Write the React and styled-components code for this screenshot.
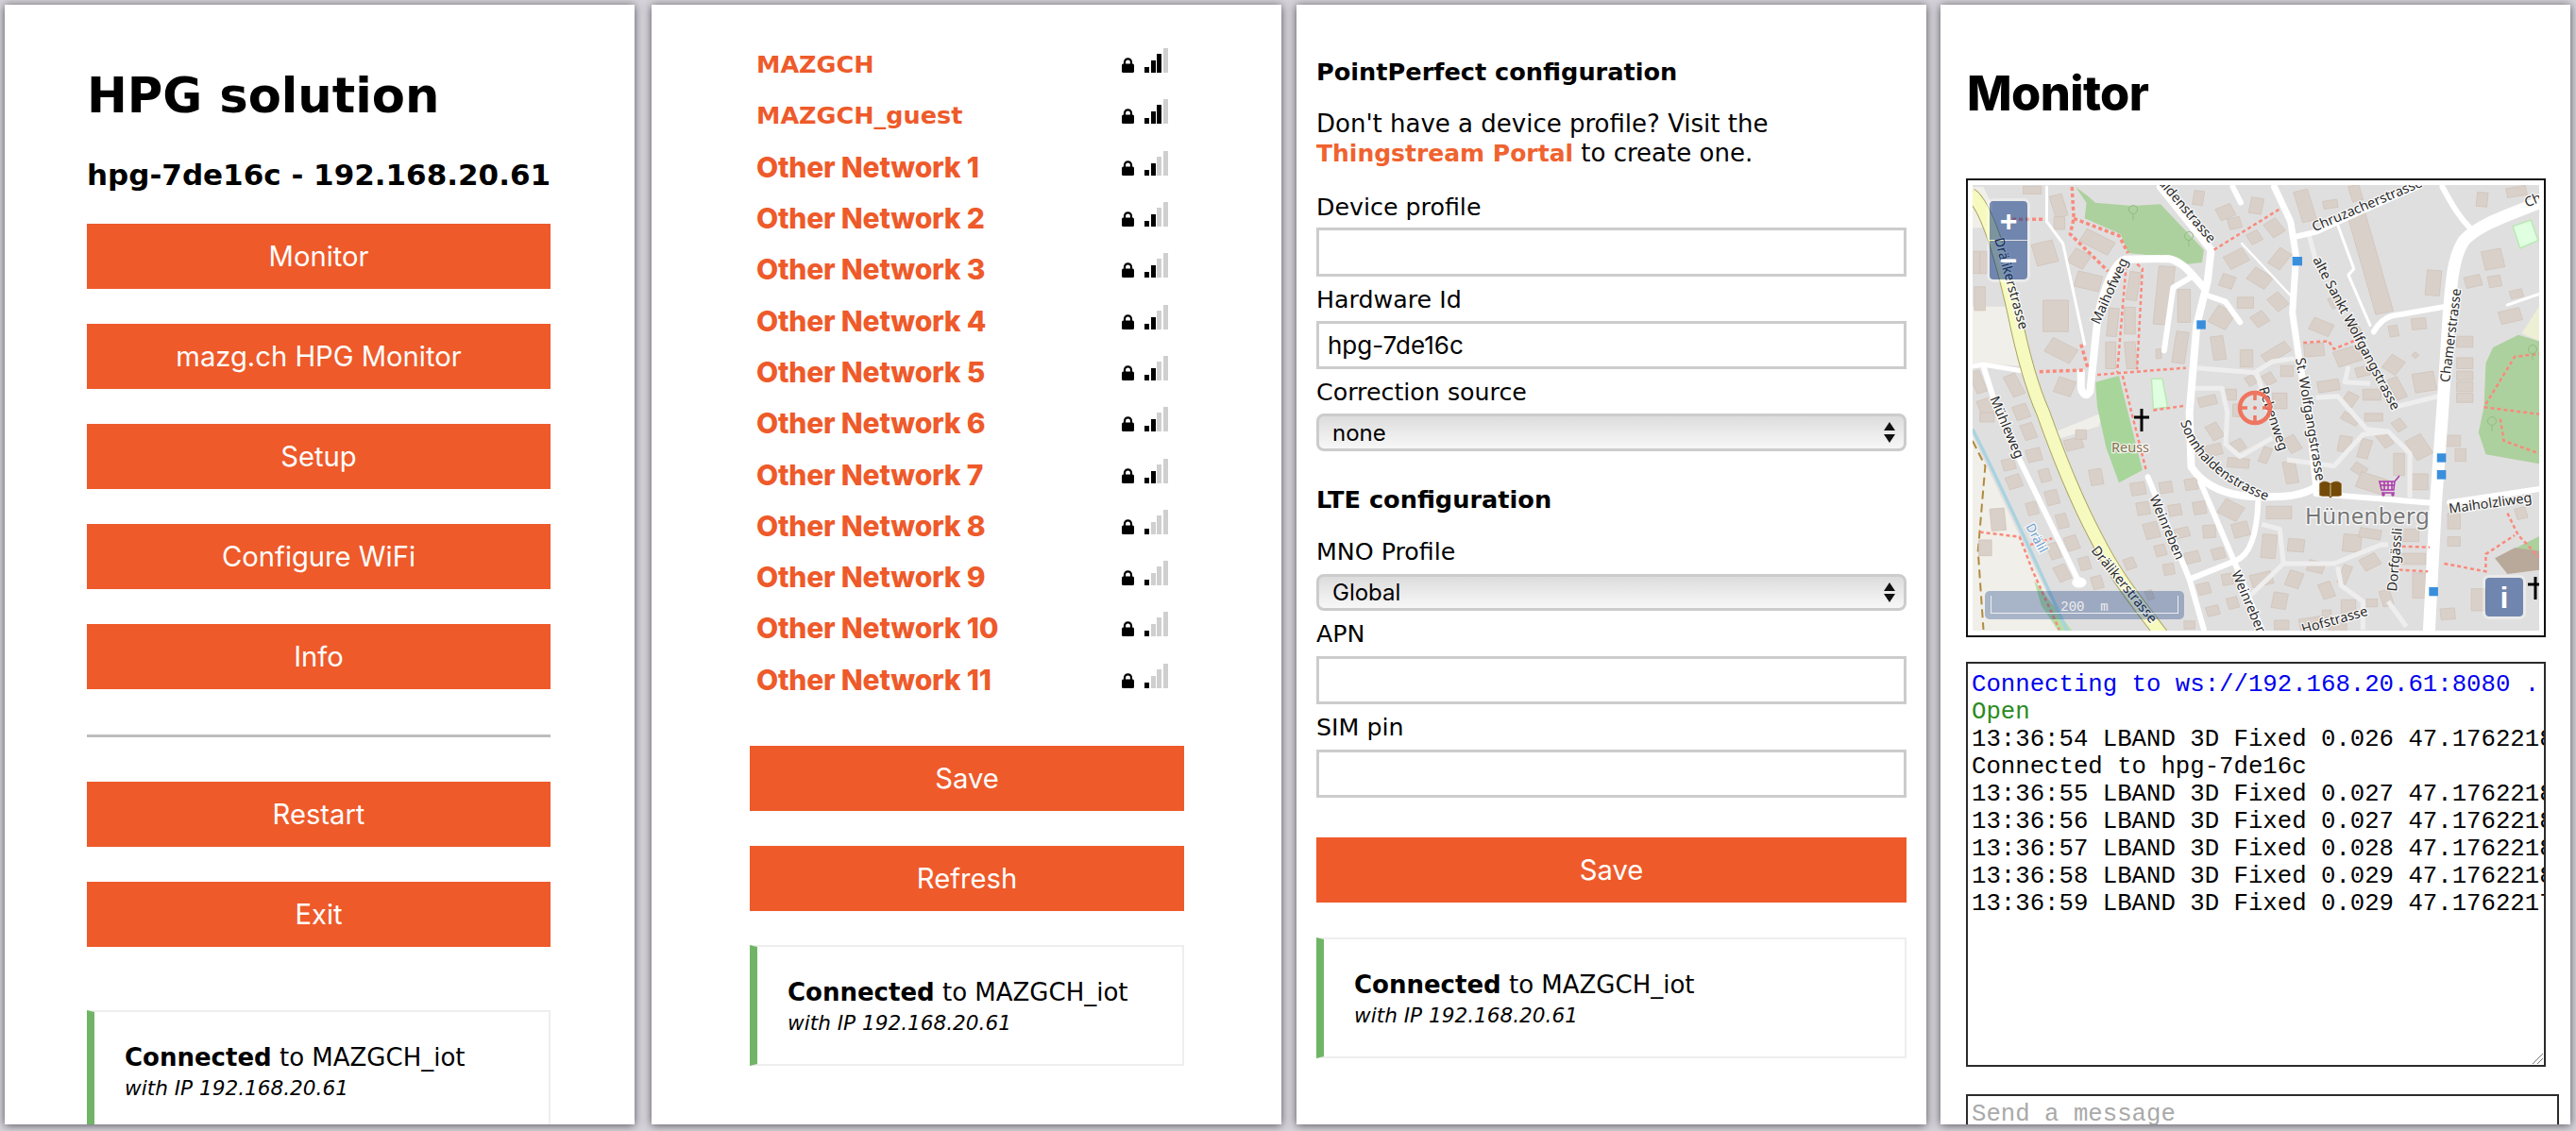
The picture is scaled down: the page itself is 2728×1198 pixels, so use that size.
import React from 'react';
import styled, { createGlobalStyle } from 'styled-components';

const ORANGE = '#ee5a2a';

const GlobalStyle = createGlobalStyle`
  html, body { margin: 0; padding: 0; background: #d6d4da; }
  * { box-sizing: border-box; }
`;

const Page = styled.div`
  display: flex;
  align-items: flex-start;
  width: 2728px;
  height: 1198px;
  padding: 5px 0 0 5px;
  overflow: hidden;
`;

const Panel = styled.section`
  flex: none;
  width: 667px;
  height: 1186px;
  margin-left: ${(p) => p.$gap || 0}px;
  padding: ${(p) => p.$pad};
  background: #fff;
  overflow: hidden;
  box-shadow: 0 1px 9px rgba(40, 38, 46, 0.75);
  font-family: 'DejaVu Sans', sans-serif;
  color: #000;
`;

const Title = styled.h1`
  margin: 0;
  font-size: 51.2px;
  line-height: 60px;
  font-weight: 700;
`;

const SubTitle = styled.h3`
  margin: 37px 0 35px;
  font-size: 31px;
  line-height: 34px;
  font-weight: 700;
  white-space: nowrap;
`;

const Button = styled.div`
  display: flex;
  align-items: center;
  justify-content: center;
  height: 69px;
  margin-top: ${(p) => p.$top ?? 37}px;
  background: ${ORANGE};
  color: #fff;
  font-family: Inter, sans-serif;
  font-size: 29.2px;
`;

const Divider = styled.hr`
  height: 3px;
  margin: 48px 0 47px;
  border: 0;
  background: #bdbdbd;
`;

const Status = styled.div`
  height: 128px;
  margin-top: ${(p) => p.$top}px;
  padding: 33px 0 0 32px;
  border: 2px solid #eee;
  border-left: 8px solid #70b566;
`;

const StatusMain = styled.div`
  font-size: 26px;
  line-height: 30px;
  white-space: nowrap;
`;

const StatusSub = styled.div`
  margin-top: 3px;
  font-size: 21.6px;
  line-height: 30px;
  font-style: italic;
`;

const NetworkList = styled.div`
  display: grid;
  grid-auto-rows: 54.3px;
  padding: 0 17px 0 7px;
`;

const NetworkRow = styled.div`
  display: flex;
  align-items: center;
  justify-content: space-between;
`;

const NetworkName = styled.a`
  color: ${ORANGE};
  font-family: ${(p) => (p.$known ? "'DejaVu Sans', sans-serif" : 'Inter, sans-serif')};
  font-size: ${(p) => (p.$known ? 25.5 : 30)}px;
  font-weight: ${(p) => (p.$known ? 700 : 800)};
  letter-spacing: ${(p) => (p.$known ? 0 : -0.2)}px;
`;

const NetworkIcons = styled.div`
  display: flex;
  align-items: flex-end;
  gap: 11px;
  margin-top: -8px;
`;

const Bars = styled.div`
  display: flex;
  align-items: flex-end;
  gap: 1.7px;
`;

const Bar = styled.i`
  display: block;
  width: 5px;
  height: ${(p) => p.$h}px;
  background: ${(p) => (p.$on ? '#000' : '#cfcfcf')};
`;

const SectionTitle = styled.h4`
  margin: ${(p) => p.$margin};
  font-size: 25.6px;
  line-height: 34px;
  font-weight: 700;
`;

const Paragraph = styled.p`
  margin: 23px 0 27px;
  font-size: 26px;
  line-height: 31px;
`;

const PortalLink = styled.a`
  color: #f0622f;
  font-size: 25px;
  font-weight: 700;
`;

const Label = styled.label`
  display: block;
  margin-top: ${(p) => p.$top ?? 10}px;
  margin-bottom: ${(p) => p.$bottom ?? 8}px;
  font-size: 25.3px;
  line-height: 30px;
`;

const TextInput = styled.input`
  display: block;
  width: 100%;
  height: ${(p) => p.$h || 51}px;
  padding: 0 9px;
  border: 3px solid #ccc;
  border-radius: 0;
  outline: 0;
  background: #fff;
  color: #000;
  font-family: Inter, sans-serif;
  font-size: 26px;
`;

const SelectWrap = styled.div`
  position: relative;
  height: ${(p) => p.$h || 40}px;

  &::before,
  &::after {
    content: '';
    position: absolute;
    right: 12px;
    border-left: 6px solid transparent;
    border-right: 6px solid transparent;
  }
  &::before {
    top: 9px;
    border-bottom: 9px solid #111;
  }
  &::after {
    bottom: 9px;
    border-top: 9px solid #111;
  }
`;

const Select = styled.select`
  display: block;
  width: 100%;
  height: 100%;
  padding: 0 0 0 14px;
  border: 3px solid #ccc;
  border-radius: 8px;
  outline: 0;
  appearance: none;
  background: linear-gradient(#dcdcdc, #ececec 55%, #f7f7f7);
  color: #000;
  font-family: Inter, sans-serif;
  font-size: 24px;
`;

const MonitorTitle = styled.h1`
  margin: 0 0 60px 1px;
  font-family: Inter, sans-serif;
  font-size: 50.5px;
  line-height: 60px;
  font-weight: 800;
  letter-spacing: -0.6px;
`;

const MapFrame = styled.div`
  width: 614px;
  height: 486px;
  padding: 5px;
  border: 2px solid #111;
`;

const MapBox = styled.div`
  position: relative;
  width: 600px;
  height: 472px;
  overflow: hidden;
  background: #e0dfdf;
`;

const MapSvg = styled.svg`
  display: block;
  path, polygon, rect {
    vector-effect: non-scaling-stroke;
  }
  text {
    font-family: 'Noto Sans', sans-serif;
    paint-order: stroke;
    stroke: rgba(255, 255, 255, 0.8);
    stroke-width: 2.5px;
  }
`;

const ZoomControl = styled.div`
  position: absolute;
  left: 18px;
  top: 17px;
  width: 40px;
  display: flex;
  flex-direction: column;
  gap: 1px;
  outline: 3px solid rgba(255, 255, 255, 0.35);
  border-radius: 4px;
`;

const MapButton = styled.div`
  display: flex;
  align-items: center;
  justify-content: center;
  width: 40px;
  height: 41px;
  background: rgba(0, 45, 125, 0.5);
  border-radius: ${(p) => p.$radius || '4px'};
  color: #fff;
  font-family: 'Liberation Sans', sans-serif;
  font-size: 32px;
  font-weight: 700;
  line-height: 1;
`;

const InfoButton = styled(MapButton)`
  position: absolute;
  left: 543px;
  top: 416px;
  outline: 3px solid rgba(255, 255, 255, 0.35);
`;

const ScaleBox = styled.div`
  position: absolute;
  left: 13px;
  top: 430px;
  width: 211px;
  height: 30px;
  padding: 5px 6px 6px;
  background: rgba(0, 45, 125, 0.3);
  border-radius: 5px;
`;

const ScaleLine = styled.div`
  height: 19px;
  border: 1px solid #eee;
  border-top: 0;
  color: #eee;
  font-family: 'Liberation Mono', monospace;
  font-size: 14px;
  line-height: 24px;
  text-align: center;
  white-space: pre;
`;

const LogBox = styled.div`
  position: relative;
  width: 614px;
  height: 429px;
  margin-top: 26px;
  padding: 8px 0 0 4px;
  border: 2px solid #2b2b2b;
  overflow: hidden;
  font-family: 'Liberation Mono', monospace;
  font-size: 25.7px;
  line-height: 29px;
`;

const LogLine = styled.div`
  color: ${(p) => p.$color || '#000'};
  white-space: pre;
`;

const ResizeGrip = styled.svg`
  position: absolute;
  right: 1px;
  bottom: 1px;
`;

const MessageInput = styled.input`
  display: block;
  width: 628px;
  height: 42px;
  margin-top: 29px;
  padding: 0 4px;
  border: 2px solid #2b2b2b;
  border-radius: 0;
  outline: 0;
  font-family: 'Liberation Mono', monospace;
  font-size: 25.7px;
  &::placeholder {
    color: #a9a9a9;
  }
`;

const networks = [
  ['MAZGCH', 3, true],
  ['MAZGCH_guest', 3, true],
  ['Other Network 1', 2],
  ['Other Network 2', 2],
  ['Other Network 3', 2],
  ['Other Network 4', 2],
  ['Other Network 5', 2],
  ['Other Network 6', 2],
  ['Other Network 7', 2],
  ['Other Network 8', 1],
  ['Other Network 9', 1],
  ['Other Network 10', 1],
  ['Other Network 11', 1],
];

const logLines = [
  ['Connecting to ws://192.168.20.61:8080 ...', '#0000ee'],
  ['Open', '#2b8a1e'],
  ['13:36:54 LBAND 3D Fixed 0.026 47.17622185'],
  ['Connected to hpg-7de16c'],
  ['13:36:55 LBAND 3D Fixed 0.027 47.17622184'],
  ['13:36:56 LBAND 3D Fixed 0.027 47.17622183'],
  ['13:36:57 LBAND 3D Fixed 0.028 47.17622182'],
  ['13:36:58 LBAND 3D Fixed 0.029 47.17622181'],
  ['13:36:59 LBAND 3D Fixed 0.029 47.17622179'],
];

// map is authored in the coordinates of the zoomed crops: x * 2.613, y * 3
const LOW = 717;

const terrain = [
  ['#f1efe9', '0,0 30,0 55,60 50,130 0,130'],
  ['#f1efe9', '0,380 105,380 150,570 0,560'],
  ['#f1efe9', '0,790 20,840 180,1230 270,1434 0,1434'],
  ['#f1efe9', '225,780 360,717 350,760 240,800'],
  ['#add19e', '285,0 320,30 340,50 440,60 520,55 640,200 635,240 595,245 560,225 430,210 410,150 310,100 315,50'],
  ['#a8d59a', '340,620 405,600 430,717 470,900 405,940 370,830 345,700'],
  ['#add19e', '1440,510 1510,470 1568,490 1568,880 1420,850 1400,780 1415,700 1420,560'],
  ['#eef0d5', '1520,465 1568,380 1568,490'],
  ['#add19e', '1480,1160 1568,1110 1568,1170 1510,1170'],
  ['#b8e0a8', '170,1250 230,1340 290,1434 250,1434 190,1330'],
  ['#b9a99a', '1445,1180 1500,1147 1568,1157 1568,1217 1480,1230'],
];

const pitches = ['1495,125 1545,105 1565,170 1515,195', '495,610 525,610 540,700 500,705'];

const roads = [
  ['M1568 50 C1480 90 1400 120 1360 170 C1330 220 1325 300 1318 400 L1300 717 L1282 1000 L1262 1434', 13],
  ['M1380 135 C1340 90 1320 40 1300 0', 6],
  ['M895 158 L950 143 C1050 90 1150 40 1230 0', 6],
  ['M520 0 L660 200 L650 300 L620 440 L605 650 L600 717 L605 890 C640 950 700 985 800 985 C860 985 910 985 955 950', 8],
  ['M835 0 L880 110 L895 220 L885 400 L905 560 L930 717 L950 950', 7],
  ['M720 0 L742 50', 6],
  ['M745 180 L880 345', 2.5],
  ['M1010 120 L1055 260 L1040 280 L1100 440', 3],
  ['M300 590 L300 640 Q310 675 325 650 L345 430 C350 380 380 250 420 230 L540 228 C580 235 600 270 640 320', 8],
  ['M600 290 L555 320 L545 400 L530 520', 6],
  ['M650 345 L700 365 L740 430', 6],
  ['M205 0 L205 110 L250 180 L310 500', 3],
  ['M0 570 L30 565 L140 585', 5],
  ['M30 570 L70 717 L130 867 L295 1257', 6],
  ['M1110 460 Q1130 420 1160 410 L1310 380', 6],
  ['M1480 375 L1568 340', 3],
  ['M950 975 L1280 1005', 6],
  ['M1320 1003 L1568 960', 6],
  ['M485 922 L600 1247 L640 1407', 6],
  ['M630 937 L730 1207 L800 1407', 6],
  ['M600 1247 L730 1187 Q785 1160 790 1002', 6],
];

const lanes = [
  'M930 150 L950 235',
  'M620 575 L780 590 L830 555 L890 545',
  'M615 640 L690 640 L705 717 L700 817 L740 857 L830 797',
  'M950 670 L1010 665 L1060 730 L1090 770 L1150 777 L1210 847 L1210 987',
  'M1040 570 L1030 620 L1100 625',
  'M1165 700 L1290 665',
  'M870 867 L1000 887 L1080 787 L1150 777',
  'M800 1072 L850 1087 L860 1197 L1000 1197 L1130 1137 L1150 1137',
  'M860 1197 L770 1297',
  'M1010 1207 L1020 1267 L1080 1317 L1080 1407',
  'M1150 1317 L1200 1397',
  'M785 590 L800 640',
];

const dotted = [
  ['M110 103 L200 103', 3.5],
  ['M275 0 L280 100 L270 150 L375 268', 3.5],
  ['M280 100 L405 155 L430 210', 3.5],
  ['M455 245 L470 260 L455 580', 2.5],
  ['M425 250 L400 590', 2.5],
  ['M185 587 L310 582', 3.5],
  ['M300 500 L320 580', 3.5],
  ['M345 597 L590 575', 2.5],
  ['M668 200 L850 70', 2.5],
  ['M915 495 L985 490 L1000 515 L1075 480', 2.5],
  ['M415 600 L440 717 L480 900', 2.5],
  ['M500 710 L590 695', 2.5],
  ['M1420 690 L1500 540 L1568 530', 2.5],
  ['M1415 700 L1568 722', 2.5],
  ['M1460 737 L1470 807 L1568 847', 2.5],
  ['M20 1097 L130 1112 L165 1217 L240 1407', 2.5],
  ['M160 1137 L220 1117', 2.5],
  ['M1170 1142 L1265 1145', 2.5],
  ['M1180 1217 L1260 1222', 2.5],
  ['M1305 1197 L1420 1222 L1420 1167 L1500 1107', 2.5],
  ['M1480 1037 L1510 1107 L1568 1177', 2.5],
];

const upperBuildings = [
  [165, 10, 50, 25, 0], [238, 60, 35, 70, -15], [240, 115, 30, 40, 0], [625, 35, 28, 45, 8], [700, 80, 45, 40, -25],
  [725, 115, 35, 35, -15], [785, 60, 35, 50, 10], [835, 130, 40, 50, -35], [780, 160, 35, 35, -30], [920, 60, 40, 100, -15],
  [990, 55, 40, 25, -10], [1060, 20, 30, 50, -15], [1100, 240, 50, 330, -14], [1410, 40, 30, 45, 5], [1505, 15, 55, 30, -10],
  [1440, 230, 55, 60, -12], [1385, 300, 45, 35, -15], [1445, 300, 35, 35, -10], [1505, 340, 35, 25, -15], [1488, 410, 60, 40, -15],
  [1275, 305, 40, 80, 5], [1235, 435, 40, 35, -5], [1165, 458, 25, 35, -10], [530, 345, 45, 185, 5], [585, 378, 35, 105, 0],
  [445, 315, 30, 90, 8], [435, 425, 30, 85, 0], [388, 430, 28, 90, 5], [382, 535, 28, 85, 0], [438, 535, 30, 85, -5],
  [575, 510, 35, 100, 8], [680, 512, 35, 75, -8], [758, 545, 35, 55, 0], [515, 530, 15, 30, 0], [705, 300, 38, 40, 20],
  [795, 290, 60, 45, 35], [850, 228, 40, 60, 35], [730, 228, 60, 45, -30], [755, 368, 45, 35, 0], [845, 365, 40, 50, -40],
  [795, 420, 40, 40, -35], [690, 415, 55, 60, 30], [1005, 365, 35, 35, -25], [965, 445, 60, 40, 25], [1055, 450, 30, 45, -30],
  [945, 518, 55, 40, -5], [840, 527, 80, 35, -35], [1045, 535, 85, 50, -20], [1165, 565, 45, 50, 35], [1250, 620, 60, 60, -10],
  [1225, 535, 15, 15, 45], [985, 632, 60, 35, -10], [1085, 585, 50, 30, -15], [1105, 660, 50, 35, 0], [1175, 640, 30, 70, -25],
  [1045, 675, 35, 40, 30], [1362, 492, 45, 35, 0], [1362, 560, 45, 35, 0], [1362, 600, 45, 30, 0], [1362, 635, 45, 30, 0],
  [1362, 670, 45, 30, 0], [20, 355, 30, 75, 0], [5, 240, 30, 70, 0], [30, 240, 20, 70, 0], [230, 410, 70, 100, 0],
  [245, 520, 80, 50, 30], [200, 210, 60, 70, -15], [295, 228, 50, 50, 30], [320, 300, 70, 50, 15], [345, 175, 90, 45, 30],
  [15, 620, 30, 70, -20], [115, 630, 35, 70, -25], [255, 635, 50, 50, 20], [35, 700, 35, 50, -20], [135, 715, 40, 45, -20],
  [820, 610, 30, 35, -30], [870, 585, 35, 35, 0], [770, 615, 25, 30, -30], [650, 680, 50, 30, -15], [715, 660, 30, 35, 0],
  [850, 680, 40, 50, 0], [730, 710, 20, 40, 0],
];

const lowerBuildings = [
  [40, 15, 40, 30, 0], [155, 60, 35, 50, -20], [170, 135, 40, 40, -15], [100, 165, 35, 35, -15], [115, 220, 40, 40, -20],
  [200, 200, 30, 40, -15], [220, 270, 35, 45, -15], [165, 305, 30, 40, -15], [248, 345, 30, 45, -15], [275, 415, 35, 45, -20],
  [310, 480, 30, 40, -15], [248, 510, 35, 50, -25], [345, 540, 30, 40, -15], [70, 340, 40, 70, -5], [35, 430, 35, 50, 0],
  [225, 440, 30, 50, -20], [280, 100, 50, 35, -15], [300, 70, 30, 30, 0], [342, 205, 35, 50, -10], [435, 480, 30, 35, -20],
  [490, 580, 20, 30, -20], [458, 242, 40, 40, -10], [535, 238, 35, 35, -10], [605, 228, 35, 35, -10], [472, 305, 35, 40, -10],
  [560, 310, 35, 35, -10], [628, 303, 35, 40, -10], [495, 375, 40, 50, -15], [580, 382, 40, 30, -15], [655, 378, 35, 40, -5],
  [520, 438, 30, 35, -15], [608, 460, 40, 35, -15], [680, 448, 35, 35, -15], [543, 498, 30, 35, -10], [715, 310, 60, 50, 30],
  [742, 372, 45, 45, -15], [848, 318, 70, 40, 0], [670, 60, 35, 50, -30], [665, 120, 50, 35, -15], [735, 105, 35, 35, -30],
  [810, 135, 25, 50, 20], [735, 160, 60, 30, 5], [885, 100, 35, 50, -30], [880, 190, 35, 70, -10], [1030, 100, 35, 50, 10],
  [1085, 115, 30, 60, 15], [1140, 85, 30, 50, -35], [1180, 165, 30, 70, 0], [1235, 110, 50, 70, -30], [1235, 220, 50, 50, 0],
  [1045, 20, 50, 25, 30], [1110, 15, 50, 25, 0], [1180, 40, 30, 35, -35], [1070, 180, 40, 30, 35], [1105, 225, 80, 50, 20],
  [1330, 90, 40, 35, 0], [1350, 135, 30, 40, 0], [1332, 345, 35, 50, 0], [1332, 410, 35, 30, 0], [1518, 320, 30, 35, -15],
  [820, 425, 40, 75, 5], [895, 422, 45, 40, 5], [1050, 415, 50, 55, 5], [1100, 385, 60, 30, 10], [1210, 390, 50, 40, 0],
  [1218, 465, 70, 35, 0], [950, 490, 45, 35, 15], [890, 530, 40, 50, 20], [1100, 475, 50, 40, -30], [1030, 515, 25, 60, 20],
  [800, 530, 60, 40, -15], [705, 530, 30, 35, -10], [640, 560, 35, 35, -15], [720, 605, 30, 35, -15], [665, 630, 35, 30, -15],
  [850, 598, 40, 50, 10], [980, 565, 35, 50, -20], [1040, 620, 40, 50, 0], [1105, 605, 30, 25, 0], [1145, 590, 30, 50, -15],
  [1235, 550, 35, 80, 0], [980, 640, 25, 25, 0], [935, 672, 60, 40, -10], [855, 675, 40, 30, 0], [1010, 690, 50, 40, 0],
  [1315, 640, 40, 35, -5], [1400, 595, 40, 70, 0], [600, 675, 30, 25, 0],
];

// x, y in real px, angle, text
const streetLabels = [
  [251, 63, 50, 'Sonnhaldenstrasse', 'end'],
  [362, 50, -23, 'Chruzacherstrasse'],
  [360, 80, 62.5, 'alte Sankt Wolfgangstrasse'],
  [342, 186, 80.6, 'St. Wolfgangstrasse'],
  [134, 150, -66, 'Maihofweg'],
  [23, 58, 74.7, 'Drälikerstrasse'],
  [18, 229, 67, 'Mühleweg'],
  [303, 218, 72, 'Rebenweg'],
  [187, 335, 67, 'Weinreben'],
  [274, 416, 67, 'Weinreben'],
  [505, 212, -83, 'Chamerstrasse'],
  [505, 352, -8, 'Maiholzliweg'],
  [449, 436, -85, 'Dorfgässli'],
  [350, 481, -16, 'Hofstrasse'],
  [125, 392, 51, 'Drälikerstrasse'],
  [587, 24, -23, 'Ch'],
];

const Lock = () => (
  <svg width="13" height="16" viewBox="0 0 13 16">
    <path d="M3 7.5V4.8a3.5 3.5 0 0 1 7 0v2.7" fill="none" stroke="#000" strokeWidth="2.2" />
    <rect x="0" y="6.6" width="13" height="9.4" rx="1.6" fill="#000" />
  </svg>
);

const Signal = ({ level }) => (
  <Bars>
    {[6, 13, 20, 26].map((h, i) => (
      <Bar key={h} $h={h} $on={i < level} />
    ))}
  </Bars>
);

const Building = ({ b, dy = 0 }) => (
  <rect
    x={b[0] - b[2] / 2}
    y={b[1] + dy - b[3] / 2}
    width={b[2]}
    height={b[3]}
    transform={`rotate(${b[4]} ${b[0]} ${b[1] + dy})`}
    fill="#d9d0c9"
    stroke="#cfc4ba"
    strokeWidth="0.8"
  />
);

const Tree = ({ x, y }) => (
  <g fill="none" stroke="#8fbd80" strokeWidth="1">
    <circle cx={x} cy={y} r="4.5" />
    <path d={`M${x} ${y + 4}v7`} />
  </g>
);

const MapDrawing = () => (
  <MapSvg width="600" height="472" viewBox="0 0 600 472">
    <rect width="600" height="472" fill="#e0dfdf" />
    <g transform="translate(0 2) scale(0.3827 0.3333)">
      {terrain.map(([fill, points]) => (
        <polygon key={points} fill={fill} points={points} />
      ))}
      {pitches.map((points) => (
        <polygon key={points} fill="#dfffe0" stroke="#b9e8b4" strokeWidth="1.5" points={points} />
      ))}
      <path d="M0 770 C70 930 150 1130 190 1230 C230 1330 250 1380 270 1434" fill="none" stroke="#aad3df" strokeWidth="3.5" />
      <path d="M0 807 L35 887 L15 1157 L30 1407" fill="none" stroke="#b08a3e" strokeWidth="2" strokeDasharray="9 5" />
      {upperBuildings.map((b) => (
        <Building key={b.join()} b={b} />
      ))}
      {lowerBuildings.map((b) => (
        <Building key={b.join()} b={b} dy={LOW} />
      ))}
      {lanes.map((d) => (
        <path key={d} d={d} fill="none" stroke="#efeeee" strokeWidth="5" strokeLinejoin="round" />
      ))}
      {roads.map(([d, w]) => (
        <path key={d} d={d} fill="none" stroke="#fff" strokeWidth={w} strokeLinejoin="round" strokeLinecap="round" />
      ))}
      <ellipse cx="295" cy="1257" rx="20" ry="17" fill="#fff" />
      <path
        d="M-5 25 C30 50 70 170 115 400 C140 540 165 640 195 717 C230 830 280 980 340 1110 C400 1250 470 1340 530 1434"
        fill="none"
        stroke="#a9a564"
        strokeWidth="15"
      />
      <path
        d="M-5 25 C30 50 70 170 115 400 C140 540 165 640 195 717 C230 830 280 980 340 1110 C400 1250 470 1340 530 1434"
        fill="none"
        stroke="#f7fabf"
        strokeWidth="13"
      />
      {dotted.map(([d, w]) => (
        <path key={d} d={d} fill="none" stroke="#f98a7c" strokeWidth={w} strokeDasharray="4 3" />
      ))}
      {[
        [885, 222, 27, 28],
        [620, 424, 25, 28],
        [1285, 847, 25, 28],
        [1285, 900, 25, 29],
        [1263, 1272, 25, 28],
      ].map(([x, y, w, h]) => (
        <rect key={y} x={x} y={y} width={w} height={h} fill="#3a8fdd" />
      ))}
    </g>

    <Tree x={170} y={26} />
    <Tree x={229} y={54} />
    <Tree x={593} y={174} />
    <Tree x={550} y={250} />

    <g transform="scale(1 0.988)">
      {streetLabels.map(([x, y, angle, label, anchor]) => (
        <text
          key={label + x}
          x={x}
          y={y}
          transform={`rotate(${angle} ${x} ${y})`}
          textAnchor={anchor || 'start'}
          fontSize="14.4"
          fill="#2a2a2a"
        >
          {label}
        </text>
      ))}
      <path id="sonnhalde" d="M220 254 Q236 308 310 338" fill="none" />
      <text fontSize="14.4" fill="#2a2a2a">
        <textPath href="#sonnhalde">Sonnhaldenstrasse</textPath>
      </text>
      <text x="56" y="366" transform="rotate(62 56 366)" fontSize="13.5" fill="#6a9fd0">
        Drälil
      </text>
    </g>

    <text x="352" y="359" fontSize="24" fill="#777" letterSpacing="0.4">
      Hünenberg
    </text>
    <text x="147" y="283" fontSize="14.5" fill="#8a7050">
      Reuss
    </text>

    {/* church crosses */}
    <path d="M179 237v24M171 246h16" stroke="#000" strokeWidth="3" fill="none" />
    <path d="M596 415v24M588 423h16" stroke="#000" strokeWidth="3" fill="none" />

    {/* position marker */}
    <g stroke="#f0705a" fill="none" opacity="0.95">
      <circle cx="299" cy="236" r="16" strokeWidth="4.5" />
      <path d="M299 218v10M299 244v10M281 236h10M307 236h10" strokeWidth="3.5" />
      <circle cx="299" cy="236" r="1" strokeWidth="2" />
    </g>

    {/* library book */}
    <path
      d="M367 316l3-2c4-1 7 0 9 2 2-2 5-3 9-2l3 2v13l-3 1h-7l-2 2-2-2h-7l-3-1z"
      fill="#734a08"
      stroke="#fff"
      strokeWidth="0.6"
    />
    <path d="M379 317v13" stroke="#d9c49a" strokeWidth="1" />

    {/* supermarket cart */}
    <g stroke="#ac39ac" fill="none" strokeWidth="1.5">
      <path d="M430 314h17l5-6M431 314l2 9h13l1-9M432 318h15M436 314v9M440 314v9M444 314v9M433 326h14" />
      <circle cx="435" cy="328" r="1" />
      <circle cx="445" cy="328" r="1" />
    </g>
  </MapSvg>
);

const StatusCard = ({ top }) => (
  <Status $top={top}>
    <StatusMain>
      <b>Connected</b> to MAZGCH_iot
    </StatusMain>
    <StatusSub>with IP 192.168.20.61</StatusSub>
  </Status>
);

function App() {
  return (
    <>
      <GlobalStyle />
      <Page>
        <Panel $pad="66px 89px 0 87px">
          <Title>HPG solution</Title>
          <SubTitle>hpg-7de16c - 192.168.20.61</SubTitle>
          <Button $top={0}>Monitor</Button>
          <Button>mazg.ch HPG Monitor</Button>
          <Button>Setup</Button>
          <Button>Configure WiFi</Button>
          <Button>Info</Button>
          <Divider />
          <Button $top={0}>Restart</Button>
          <Button>Exit</Button>
          <StatusCard top={67} />
        </Panel>

        <Panel $gap={18} $pad="36px 103px 0 104px">
          <NetworkList>
            {networks.map(([name, level, known]) => (
              <NetworkRow key={name}>
                <NetworkName $known={known}>{name}</NetworkName>
                <NetworkIcons>
                  <Lock />
                  <Signal level={level} />
                </NetworkIcons>
              </NetworkRow>
            ))}
          </NetworkList>
          <Button $top={43}>Save</Button>
          <Button>Refresh</Button>
          <StatusCard top={36} />
        </Panel>

        <Panel $gap={16} $pad="54px 21px 0 21px">
          <SectionTitle $margin="0">PointPerfect configuration</SectionTitle>
          <Paragraph>
            Don't have a device profile? Visit the
            <br />
            <PortalLink>Thingstream Portal</PortalLink> to create one.
          </Paragraph>
          <Label $top={0} $bottom={6}>Device profile</Label>
          <TextInput $h={52} readOnly defaultValue="" />
          <Label $bottom={7}>Hardware Id</Label>
          <TextInput readOnly defaultValue="hpg-7de16c" />
          <Label $bottom={7}>Correction source</Label>
          <SelectWrap>
            <Select defaultValue="none">
              <option>none</option>
            </Select>
          </SelectWrap>
          <SectionTitle $margin="34px 0 0">LTE configuration</SectionTitle>
          <Label $top={24}>MNO Profile</Label>
          <SelectWrap $h={39}>
            <Select defaultValue="Global">
              <option>Global</option>
            </Select>
          </SelectWrap>
          <Label>APN</Label>
          <TextInput readOnly defaultValue="" />
          <Label>SIM pin</Label>
          <TextInput readOnly defaultValue="" />
          <Button $top={42}>Save</Button>
          <StatusCard top={37} />
        </Panel>

        <Panel $gap={15} $pad="64px 0 0 27px">
          <MonitorTitle>Monitor</MonitorTitle>
          <MapFrame>
            <MapBox>
              <MapDrawing />
              <ZoomControl>
                <MapButton $radius="4px 4px 0 0">+</MapButton>
                <MapButton $radius="0 0 4px 4px">−</MapButton>
              </ZoomControl>
              <InfoButton>i</InfoButton>
              <ScaleBox>
                <ScaleLine>200  m</ScaleLine>
              </ScaleBox>
            </MapBox>
          </MapFrame>
          <LogBox>
            {logLines.map(([text, color]) => (
              <LogLine key={text} $color={color}>
                {text}
              </LogLine>
            ))}
            <ResizeGrip width="12" height="12" viewBox="0 0 12 12">
              <path d="M1 12L12 1M6 12l6-6" stroke="#777" strokeWidth="1" fill="none" />
            </ResizeGrip>
          </LogBox>
          <MessageInput readOnly placeholder="Send a message" />
        </Panel>
      </Page>
    </>
  );
}

export default App;
